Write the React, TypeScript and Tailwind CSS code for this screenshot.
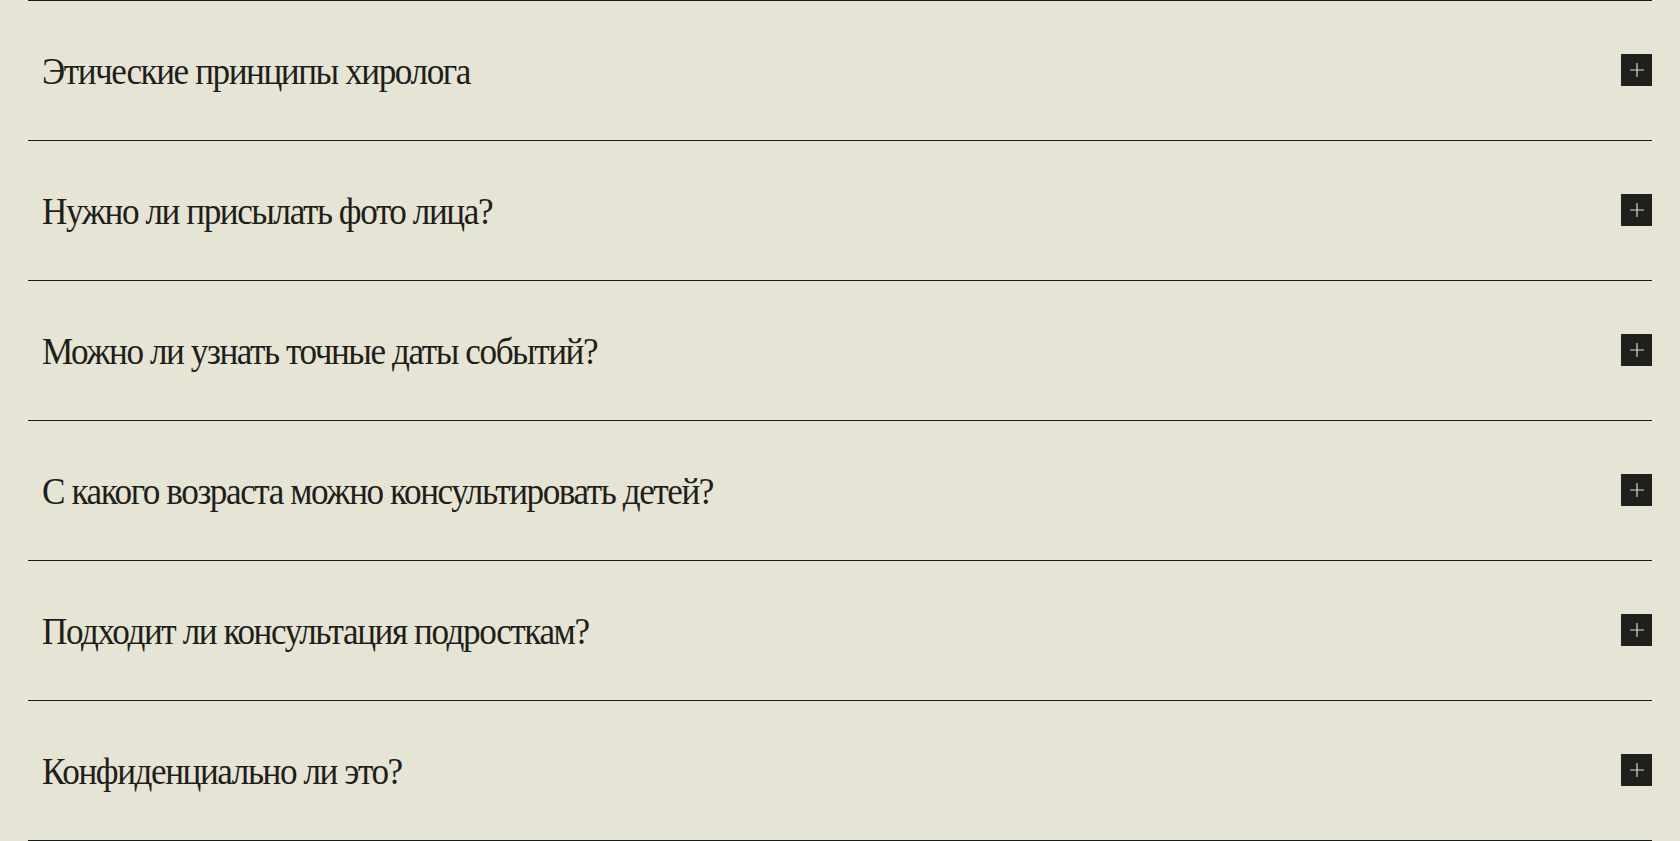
const questions = [
  'Этические принципы хиролога',
  'Нужно ли присылать фото лица?',
  'Можно ли узнать точные даты событий?',
  'С какого возраста можно консультировать детей?',
  'Подходит ли консультация подросткам?',
  'Конфиденциально ли это?',
]

function PlusButton() {
  return (
    <button className="w-[31px] h-[32px] -mt-[2px] flex items-center justify-center bg-[#1f1f1d]">
      <svg width="14" height="14" viewBox="0 0 14 14">
        <path d="M7 0V14M0 7H14" stroke="#d9d8d0" strokeWidth="1.2" />
      </svg>
    </button>
  )
}

export default function App() {
  return (
    <div className="min-h-screen bg-[#e6e4d4] px-[28px]" style={{ fontFamily: '"Liberation Serif", "Times New Roman", serif' }}>
      <div className="border-b border-[#1c1c18]">
        {questions.map(q => (
          <div key={q} className="h-[140px] border-t border-[#1c1c18] flex items-center justify-between pl-[14px]">
            <span className="inline-block origin-left scale-x-[0.95] mt-[2px] text-[37px] leading-none tracking-[-1.5px] text-[#1e1e1a]">{q}</span>
            <PlusButton />
          </div>
        ))}
      </div>
    </div>
  )
}
